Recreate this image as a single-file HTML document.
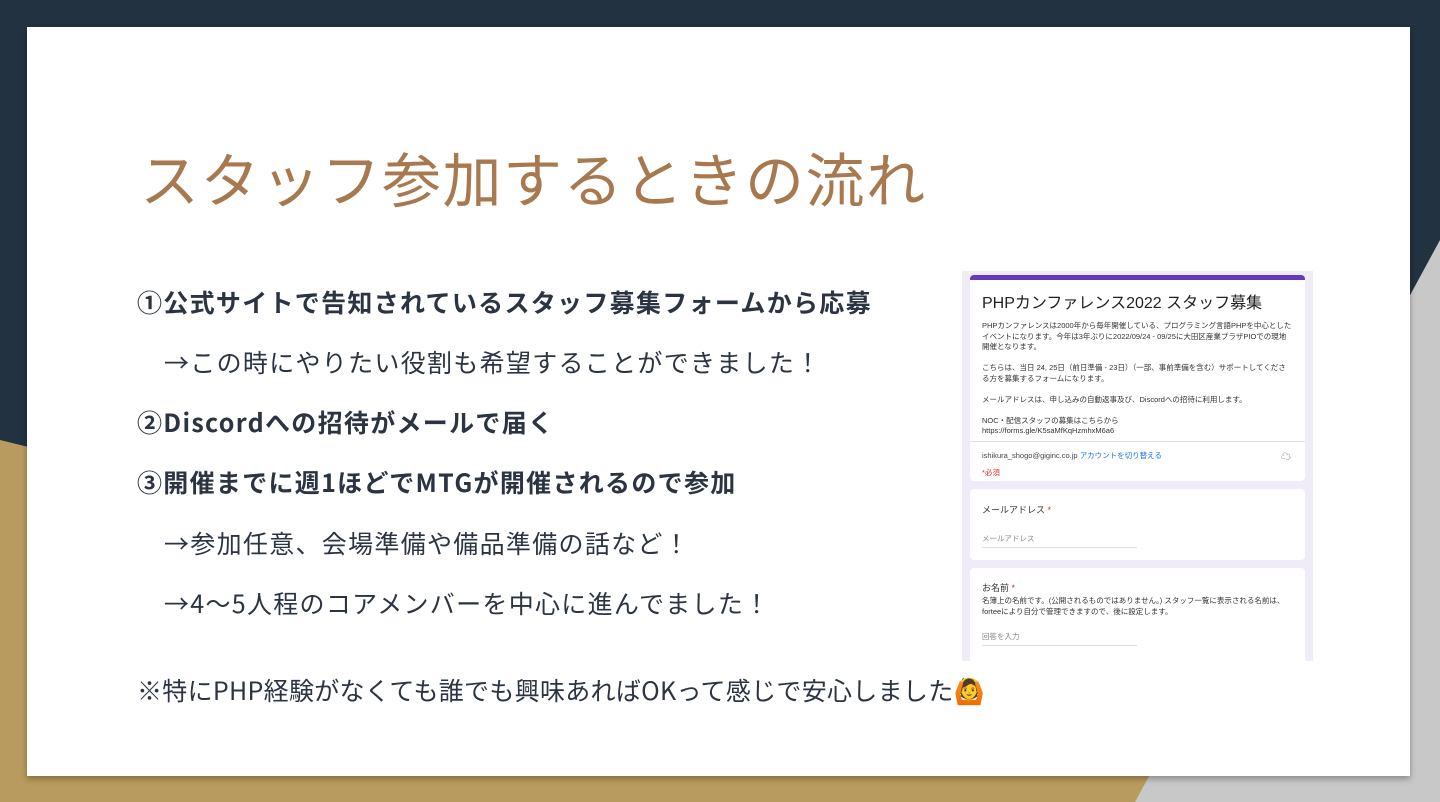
<!DOCTYPE html>
<html><head><meta charset="utf-8"><style>
*{margin:0;padding:0;box-sizing:border-box}
body{width:1440px;height:802px;overflow:hidden;background:#233240;position:relative;font-family:"Liberation Sans","Noto Sans CJK JP",sans-serif}
svg.bg{position:absolute;left:0;top:0}
.slide{position:absolute;left:27px;top:27px;width:1383px;height:749px;background:#fff;box-shadow:0 3px 6px rgba(0,0,0,.3)}
.t{position:absolute;left:113px;top:112px;font-size:59px;color:#a8794f;white-space:nowrap;letter-spacing:1.5px;font-family:"Noto Sans CJK JP",sans-serif;line-height:1.3}
.l{position:absolute;font-size:25px;color:#2b3440;white-space:nowrap;font-family:"Noto Sans CJK JP",sans-serif;line-height:36px;letter-spacing:1.3px}
.b{font-weight:bold}
.form{position:absolute;left:935px;top:244px;width:351px;height:390px;background:#efebf7;overflow:hidden}
.card{position:absolute;left:8px;width:335px;background:#fff;border-radius:4px;font-size:7.5px;color:#333;padding:0 12px}
.fs{font-size:7.5px;line-height:10.5px}
</style></head><body>
<svg class="bg" width="1440" height="802"><polygon points="0,440 1300,760 1135,802 0,802" fill="#b89b5e"/><polygon points="1440,240 1440,802 1135,802" fill="#c8c8c8"/></svg>
<div class="slide">
<div class="t">スタッフ参加するときの流れ</div>
<div class="l b" style="left:110px;top:257px">①公式サイトで告知されているスタッフ募集フォームから応募</div>
<div class="l" style="left:137px;top:317px">→この時にやりたい役割も希望することができました！</div>
<div class="l b" style="left:110px;top:377px">②Discordへの招待がメールで届く</div>
<div class="l b" style="left:110px;top:437px">③開催までに週1ほどでMTGが開催されるので参加</div>
<div class="l" style="left:137px;top:498px">→参加任意、会場準備や備品準備の話など！</div>
<div class="l" style="left:137px;top:558px">→4〜5人程のコアメンバーを中心に進んでました！</div>
<div class="l" style="left:110px;top:645px;letter-spacing:0.3px">※特にPHP経験がなくても誰でも興味あればOKって感じで安心しました🙆</div>
<div class="form">
<div class="card" style="top:4px;height:206px;border-top:5px solid #673ab7">
<div style="font-size:16px;color:#202124;margin-top:9px">PHPカンファレンス2022 スタッフ募集</div>
<div class="fs" style="margin-top:8px">PHPカンファレンスは2000年から毎年開催している、プログラミング言語PHPを中心としたイベントになります。今年は3年ぶりに2022/09/24 - 09/25に大田区産業プラザPIOでの現地開催となります。<br><br>こちらは、当日 24, 25日（前日準備 - 23日）（一部、事前準備を含む）サポートしてくださる方を募集するフォームになります。<br><br>メールアドレスは、申し込みの自動返事及び、Discordへの招待に利用します。<br><br>NOC・配信スタッフの募集はこちらから<br>https://forms.gle/K5saMfKqHzmhxM6a6</div>
<div style="position:absolute;left:0;right:0;top:161px;border-top:1px solid #e0e0e0"></div>
<div style="position:absolute;left:12px;top:170px;font-size:7.5px"><b style="font-weight:normal;color:#444">ishikura_shogo@giginc.co.jp</b> <span style="color:#1a73e8">アカウントを切り替える</span></div>
<div style="position:absolute;right:14px;top:168px;font-size:10px;color:#666">☁</div>
<div style="position:absolute;left:12px;top:187px;color:#d93025">*必須</div>
</div>
<div class="card" style="top:218px;height:71px">
<div style="font-size:9px;margin-top:14px">メールアドレス <span style="color:#d93025">*</span></div>
<div style="color:#888;margin-top:17px;width:155px;border-bottom:1px solid #ddd;padding-bottom:3px">メールアドレス</div>
</div>
<div class="card" style="top:297px;height:100px">
<div style="font-size:9px;margin-top:13px">お名前 <span style="color:#d93025">*</span></div>
<div class="fs" style="margin-top:2px">名簿上の名前です。(公開されるものではありません。) スタッフ一覧に表示される名前は、forteeにより自分で管理できますので、後に設定します。</div>
<div style="color:#888;margin-top:14px;width:155px;border-bottom:1px solid #ddd;padding-bottom:3px">回答を入力</div>
</div>
</div>
</div>
</body></html>
